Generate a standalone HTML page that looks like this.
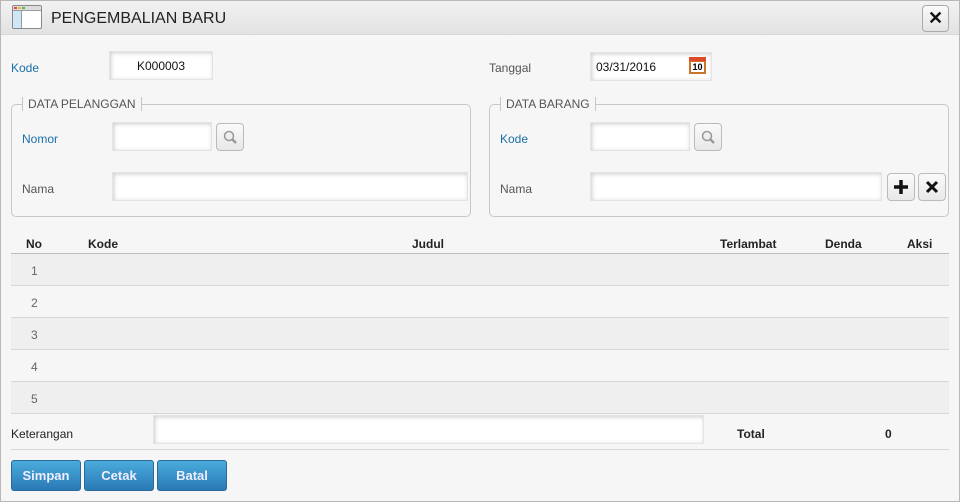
<!DOCTYPE html>
<html><head><style>
*{margin:0;padding:0;box-sizing:border-box}
body{width:960px;height:502px;background:#f6f6f6;font-family:"Liberation Sans",sans-serif;font-size:12px;color:#444;position:relative;overflow:hidden}
.a{position:absolute}
.frame{left:0;top:0;width:960px;height:502px;border:1px solid #b8b8b8}
.hdr{left:1px;top:1px;width:958px;height:34px;background:linear-gradient(#f2f2f2,#e2e2e2);border-bottom:1px solid #d8d8d8}
.inp{background:#fff;border:1px solid #e4e4e4;box-shadow:inset 1px 1px 4px #ccc}
.lbl{color:#555}
.blue{color:#1a6fa8}
.fs{border:1px solid #c8c8c8;border-radius:5px}
.leg{background:#f6f6f6;padding:0 5px;border-left:1px solid #c8c8c8;border-right:1px solid #c8c8c8;color:#555;font-size:12px;line-height:14px}
.sb{width:28px;height:28px;border:1px solid #bbb;border-radius:4px;background:linear-gradient(#fafafa,#e8e8e8)}
.row{left:11px;width:938px;height:32px;border-bottom:1px solid #d6d6d6}
.th{font-weight:bold;color:#222;font-size:12px;top:237px}
.btn{top:460px;height:31px;width:70px;border-radius:3px;background:linear-gradient(#4aabdc,#2a79b5);border:1px solid #2a6a9a;color:#eef;font-weight:bold;font-size:13px;text-align:center;line-height:30px}
</style></head><body>
<div class="a frame"></div>
<div class="a hdr"></div>
<div class="a" style="left:12px;top:5px;width:30px;height:24px;border:1px solid #888;border-radius:2px;background:#fff;overflow:hidden"><div style="height:5px;background:#ddd;border-bottom:1px solid #999;position:relative"><span style="position:absolute;left:1px;top:1px;width:3px;height:2px;background:#e44"></span><span style="position:absolute;left:5px;top:1px;width:3px;height:2px;background:#eb3"></span><span style="position:absolute;left:9px;top:1px;width:3px;height:2px;background:#5b5"></span></div><div style="position:absolute;left:0;top:5px;width:9px;height:18px;background:#cfe6f6;border-right:1px solid #999"></div></div>
<div class="a" style="left:51px;top:10px;font-size:16px;color:#222">PENGEMBALIAN BARU</div>
<div class="a" style="left:922px;top:5px;width:27px;height:27px;border:1px solid #aaa;border-radius:4px;background:linear-gradient(#fafafa,#e4e4e4);font-size:18px;font-weight:bold;text-align:center;line-height:25px;color:#111">✕</div>

<div class="a blue" style="left:11px;top:61px">Kode</div>
<div class="a inp" style="left:109px;top:51px;width:104px;height:29px;text-align:center;line-height:29px;color:#111">K000003</div>
<div class="a lbl" style="left:489px;top:61px">Tanggal</div>
<div class="a inp" style="left:590px;top:52px;width:122px;height:29px;line-height:29px;padding-left:5px;color:#111">03/31/2016</div>
<div class="a" style="left:689px;top:57px;width:17px;height:17px;background:#c9762a;border-top:4px solid #e04a2a;font-size:9px;font-weight:bold;text-align:center;line-height:12px;color:#000"><span style="background:#fff;padding:0 1px">10</span></div>

<div class="a fs" style="left:11px;top:104px;width:460px;height:113px"></div>
<div class="a leg" style="left:22px;top:97px">DATA PELANGGAN</div>
<div class="a blue" style="left:22px;top:132px">Nomor</div>
<div class="a inp" style="left:112px;top:122px;width:100px;height:29px"></div>
<div class="a sb" style="left:216px;top:123px"><svg width="26" height="26"><circle cx="12" cy="12" r="4.5" fill="#eee" stroke="#999" stroke-width="1.5"/><line x1="15" y1="15" x2="19" y2="19" stroke="#999" stroke-width="2.5"/></svg></div>
<div class="a lbl" style="left:22px;top:182px">Nama</div>
<div class="a inp" style="left:112px;top:172px;width:356px;height:29px"></div>

<div class="a fs" style="left:489px;top:104px;width:460px;height:113px"></div>
<div class="a leg" style="left:500px;top:97px">DATA BARANG</div>
<div class="a blue" style="left:500px;top:132px">Kode</div>
<div class="a inp" style="left:590px;top:122px;width:100px;height:29px"></div>
<div class="a sb" style="left:694px;top:123px"><svg width="26" height="26"><circle cx="12" cy="12" r="4.5" fill="#eee" stroke="#999" stroke-width="1.5"/><line x1="15" y1="15" x2="19" y2="19" stroke="#999" stroke-width="2.5"/></svg></div>
<div class="a lbl" style="left:500px;top:182px">Nama</div>
<div class="a inp" style="left:590px;top:172px;width:292px;height:29px"></div>
<div class="a sb" style="left:887px;top:173px"><svg width="26" height="26"><path d="M13 6V20M6 13H20" stroke="#111" stroke-width="3.5"/></svg></div>
<div class="a sb" style="left:918px;top:173px"><svg width="26" height="26"><path d="M8 8L18 18M18 8L8 18" stroke="#111" stroke-width="3"/></svg></div>

<div class="a th" style="left:26px">No</div>
<div class="a th" style="left:88px">Kode</div>
<div class="a th" style="left:412px">Judul</div>
<div class="a th" style="left:720px">Terlambat</div>
<div class="a th" style="left:825px">Denda</div>
<div class="a th" style="left:907px">Aksi</div>
<div class="a" style="left:11px;top:253px;width:938px;border-top:1px solid #bbb"></div>
<div class="a row" style="top:254px;background:#efefef"></div>
<div class="a row" style="top:286px"></div>
<div class="a row" style="top:318px;background:#efefef"></div>
<div class="a row" style="top:350px"></div>
<div class="a row" style="top:382px;background:#efefef"></div>
<div class="a" style="left:31px;top:264px;color:#666">1</div>
<div class="a" style="left:31px;top:296px;color:#666">2</div>
<div class="a" style="left:31px;top:328px;color:#666">3</div>
<div class="a" style="left:31px;top:360px;color:#666">4</div>
<div class="a" style="left:31px;top:392px;color:#666">5</div>

<div class="a" style="left:11px;top:427px;color:#222">Keterangan</div>
<div class="a inp" style="left:153px;top:415px;width:551px;height:29px"></div>
<div class="a" style="left:737px;top:427px;font-weight:bold;color:#222">Total</div>
<div class="a" style="left:885px;top:427px;font-weight:bold;color:#222">0</div>
<div class="a" style="left:11px;top:449px;width:938px;border-top:1px solid #d6d6d6"></div>

<div class="a btn" style="left:11px">Simpan</div>
<div class="a btn" style="left:84px">Cetak</div>
<div class="a btn" style="left:157px">Batal</div>
</body></html>
